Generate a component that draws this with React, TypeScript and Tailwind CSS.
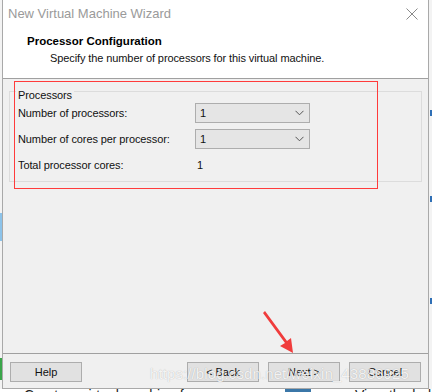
import React from "react";

const font = { fontFamily: '"Liberation Sans", Arial, sans-serif' };

function Combo({ value }: { value: string }) {
  return (
    <div className="flex h-[20px] w-[115px] items-center justify-between border border-[#adadad] bg-[#e5e5e5] pl-[4px] pr-[5px]">
      <span className="text-[11px] text-[#111]">{value}</span>
      <svg width="9" height="6" viewBox="0 0 9 6" className="mb-[1px]">
        <path d="M0.5 0.8 L4.5 4.8 L8.5 0.8" fill="none" stroke="#555" strokeWidth="1" />
      </svg>
    </div>
  );
}

function Btn({ label }: { label: string }) {
  return (
    <div className="flex h-[20px] w-[72px] items-center justify-center border border-[#adadad] bg-[#e1e1e1] text-[11px] text-[#111]">
      {label}
    </div>
  );
}

export default function App() {
  return (
    <div className="relative h-[392px] w-[432px] overflow-hidden bg-[#f3f3f3]" style={font}>
      {/* window */}
      <div className="ml-[2px] flex h-[389px] w-[427px] flex-col border border-t-0 border-[#a9a9a9] bg-[#f0f0f0]">
        <div className="flex h-[78px] flex-col bg-white">
          <div className="flex h-[27px] items-center justify-between pl-[5px] pr-[10px]">
            <span className="whitespace-nowrap text-[13px] text-[#9a9a9a]">New Virtual Machine Wizard</span>
            <svg width="12" height="12" viewBox="0 0 12 12">
              <path d="M0.5 0.5 L11.5 11.5 M11.5 0.5 L0.5 11.5" stroke="#8a8a8a" strokeWidth="1" />
            </svg>
          </div>
          <div className="pl-[24px] pt-[6px] text-[11.5px] font-bold leading-[16px] text-black">
            Processor Configuration
          </div>
          <div className="whitespace-nowrap pl-[47px] pt-[1px] text-[11px] leading-[16px] tracking-[-0.1px] text-[#111]">
            Specify the number of processors for this virtual machine.
          </div>
        </div>
        <div className="h-px bg-[#a0a0a0]" />
        <div className="flex-1 px-[6px] pt-[12px]">
          <div className="relative h-[91px] w-[413px] border border-[#dcdcdc] pl-[8px]">
            <div className="absolute -top-[5px] left-[6px] bg-[#f0f0f0] px-[2px] text-[11px] leading-[16px] tracking-[-0.1px] text-[#111]">
              Processors
            </div>
            <div className="mt-[11px] flex h-[20px] items-center">
              <span className="w-[177px] whitespace-nowrap text-[11px] tracking-[-0.1px] text-[#111]">Number of processors:</span>
              <Combo value="1" />
            </div>
            <div className="mt-[6px] flex h-[20px] items-center">
              <span className="w-[177px] whitespace-nowrap text-[11px] tracking-[-0.1px] text-[#111]">Number of cores per processor:</span>
              <Combo value="1" />
            </div>
            <div className="mt-[6px] flex h-[20px] items-center">
              <span className="w-[177px] whitespace-nowrap text-[11px] tracking-[-0.1px] text-[#111]">Total processor cores:</span>
              <span className="pl-[2px] text-[11px] text-[#111]">1</span>
            </div>
          </div>
        </div>
        <div className="h-px bg-[#a0a0a0]" />
        <div className="flex h-[34px] items-start justify-between px-[7px] pt-[8px]">
          <Btn label="Help" />
          <div className="flex gap-[9px]">
            <Btn label="< Back" />
            <Btn label="Next >" />
            <Btn label="Cancel" />
          </div>
        </div>
      </div>
      {/* background app peeking below */}
      <div className="relative h-[3px] overflow-hidden bg-white">
        <span className="absolute left-[24px] top-[-1px] whitespace-nowrap text-[14px] leading-[14px] text-[#222]">Create a virtual machine from an</span>
        <div className="absolute left-[285px] top-0 h-[3px] w-[26px] bg-[#3b77a8]" />
        <span className="absolute left-[355px] top-[-1px] whitespace-nowrap text-[14px] leading-[14px] text-[#222]">View the help</span>
      </div>
      {/* background bits at the side edges */}
      <div className="absolute left-0 top-[213px] h-[28px] w-[2px] bg-[#8cc3ea]" />
      <div className="absolute left-0 top-[358px] h-[22px] w-[2px] bg-[#3aa54a]" />
      <div className="absolute left-[430px] top-[110px] h-[6px] w-[2px] bg-[#2f6fb5]" />
      <div className="absolute left-[430px] top-[196px] h-[6px] w-[2px] bg-[#2f6fb5]" />
      <div className="absolute left-[430px] top-[298px] h-[6px] w-[2px] bg-[#2f6fb5]" />

      {/* annotations */}
      <div className="pointer-events-none absolute left-[14px] top-[81px] h-[108px] w-[364px] border border-[#ff3b3b]" />
      <svg className="pointer-events-none absolute left-[258px] top-[310px]" width="40" height="46" viewBox="0 0 40 46">
        <path d="M5 3 L27 33 L22 36 L35 43 L33 28 L29 31 L7 1 Z" fill="#f03c3c" />
      </svg>
      <div className="pointer-events-none absolute left-[150px] top-[363px] whitespace-nowrap text-[15px] tracking-[0.1px] text-white/85 [text-shadow:0_0_1px_rgba(0,0,0,0.3)]">
        https://blog.csdn.net/weixin_43886925
      </div>
    </div>
  );
}
